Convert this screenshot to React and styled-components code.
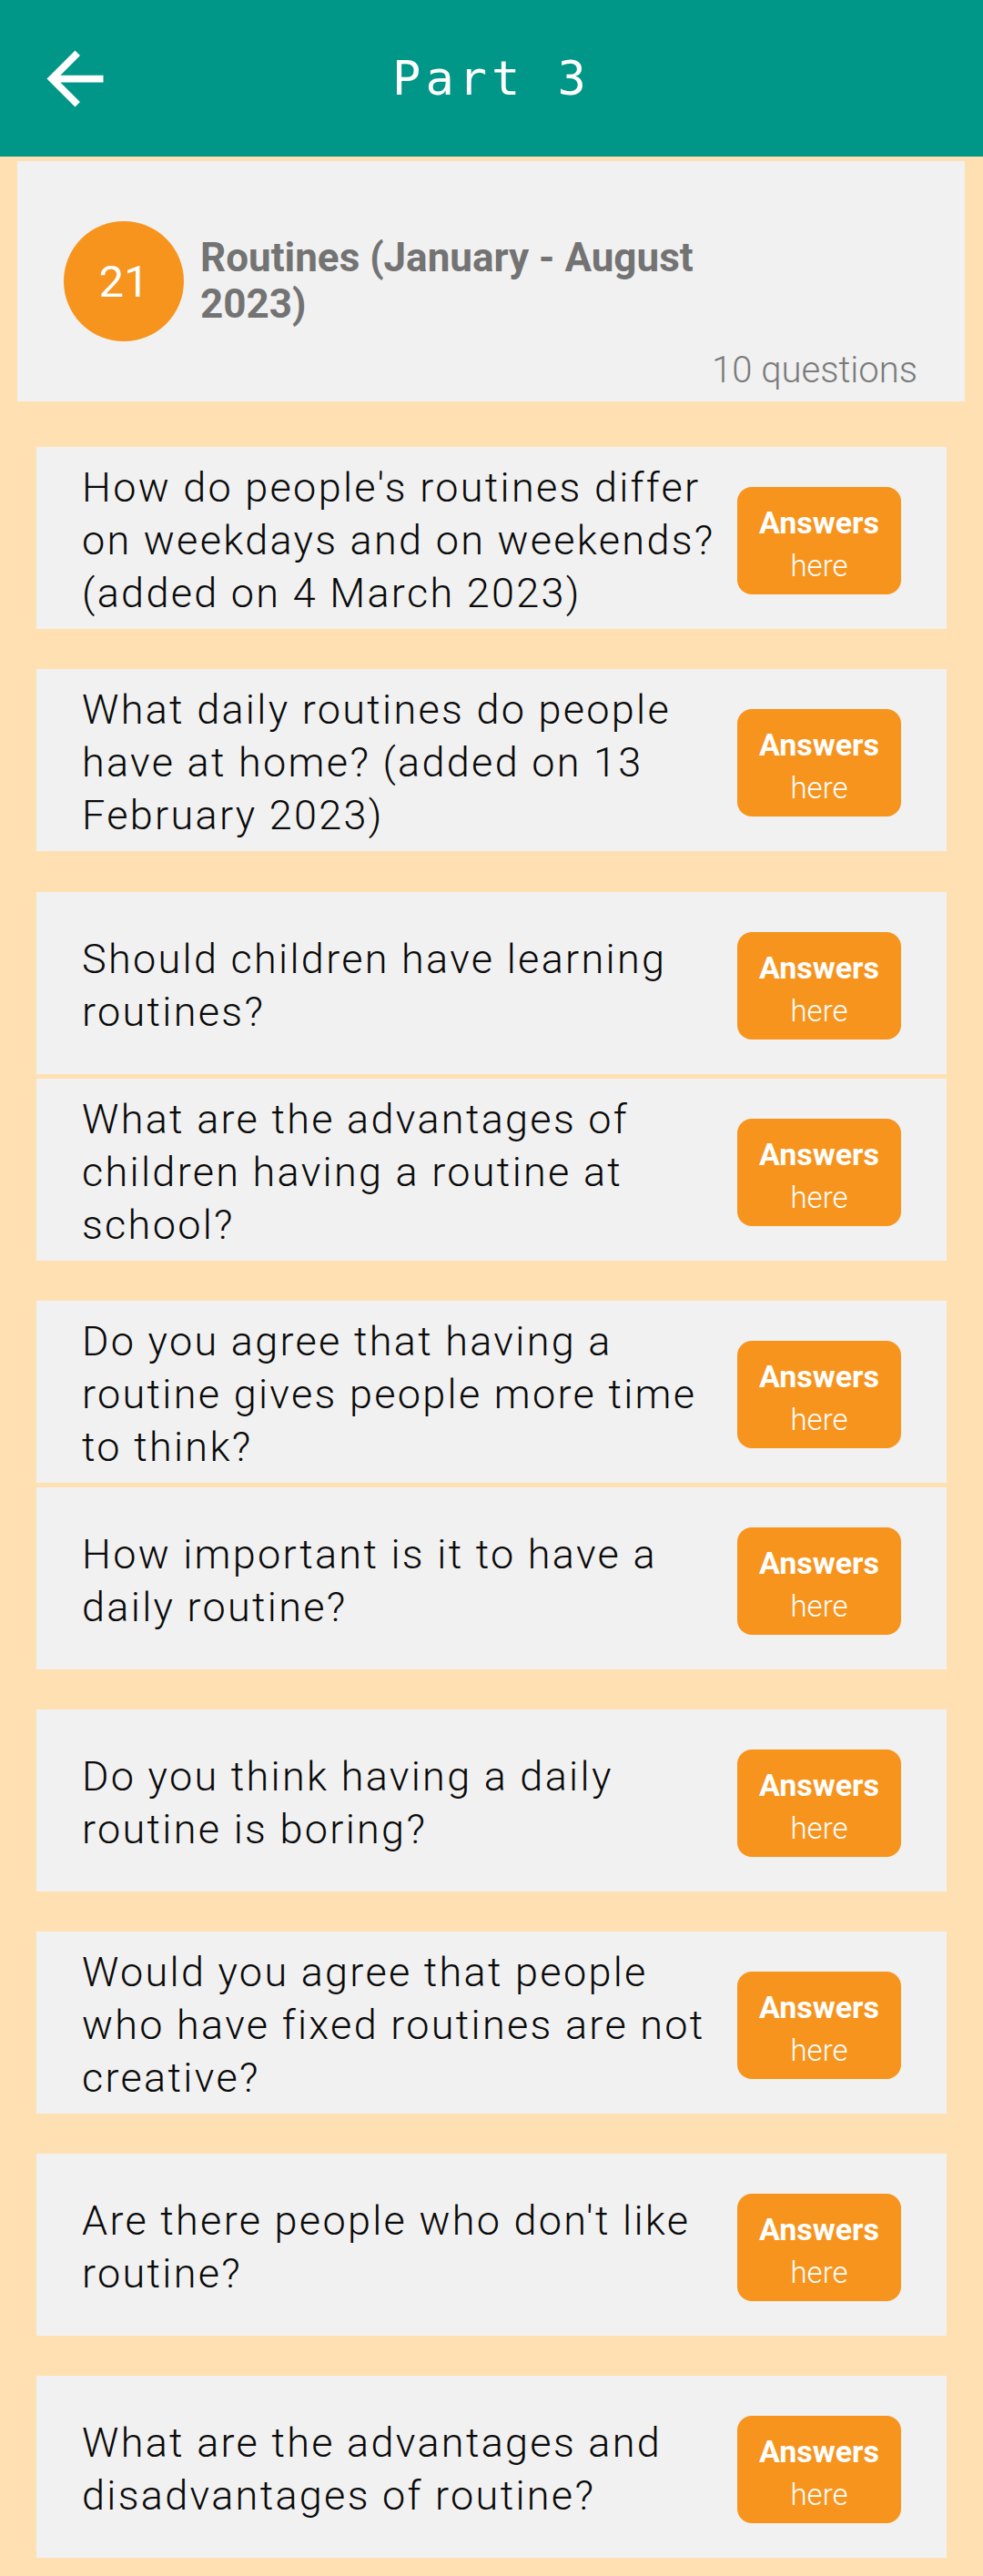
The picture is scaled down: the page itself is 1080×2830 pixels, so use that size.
import React from 'react'
import styled, { createGlobalStyle } from 'styled-components'

const GlobalStyle = createGlobalStyle`
  html, body {
    margin: 0;
    padding: 0;
    background: #ffe0b2;
  }
  body {
    font-family: Roboto, "Liberation Sans", sans-serif;
  }
`

const Page = styled.div`
  width: 1080px;
  min-height: 2830px;
  background: #ffe0b2;
  padding-bottom: 20px;
  box-sizing: border-box;
`

const TopBar = styled.header`
  height: 172px;
  background: #009688;
  display: flex;
  align-items: center;
`

const BackButton = styled.button`
  width: 93px;
  height: 93px;
  margin-left: 36px;
  padding: 0;
  border: 0;
  background: none;
  display: flex;
  align-items: center;
  justify-content: center;
  svg { width: 93px; height: 93px; display: block; }
`

const Title = styled.h1`
  flex: 1;
  margin: 0 129px 0 0;
  text-align: center;
  color: #fff;
  font-family: "DejaVu Sans Mono", "Liberation Mono", monospace;
  font-weight: 400;
  font-size: 52px;
  letter-spacing: 5px;
`

const TopicCard = styled.section`
  margin: 5px 20px 0 19px;
  background: #f1f1f1;
  padding: 66px 52px 11px 51px;
`

const TopicRow = styled.div`
  display: flex;
  align-items: center;
  gap: 18px;
`

const Badge = styled.div`
  width: 132px;
  height: 132px;
  border-radius: 50%;
  background: #f7941d;
  color: #fff;
  flex-shrink: 0;
  display: flex;
  align-items: center;
  justify-content: center;
  font-size: 49px;
  font-weight: 400;
`

const TopicTitle = styled.h2`
  margin: 0;
  max-width: 600px;
  color: #737373;
  font-size: 44px;
  line-height: 51px;
  font-weight: 700;
`

const Count = styled.div`
  margin-top: 8px;
  text-align: right;
  color: #7a7a7a;
  font-size: 40px;
  font-weight: 300;
  line-height: 47px;
`

const List = styled.div`
  display: flex;
  flex-direction: column;
  padding: 0 40px;
`

const QuestionCard = styled.div`
  margin-top: ${p => p.$gap}px;
  height: 200px;
  box-sizing: border-box;
  background: #f1f1f1;
  display: flex;
  align-items: center;
  padding: 6px 50px 0 50px;
`

const QuestionText = styled.p`
  flex: 1;
  margin: 0 21px 0 0;
  color: #0a0a0a;
  font-size: 45px;
  line-height: 58px;
  font-weight: 300;
  letter-spacing: 2.3px;
`

const AnswerButton = styled.button`
  flex-shrink: 0;
  width: 180px;
  height: 118px;
  border: 0;
  border-radius: 16px;
  background: #f7941d;
  color: #fff;
  font-family: Roboto, "Liberation Sans", sans-serif;
  display: flex;
  flex-direction: column;
  align-items: center;
  justify-content: center;
  padding: 8px 0 0;
`

const AnswerMain = styled.span`
  font-size: 34px;
  font-weight: 700;
  line-height: 48px;
`

const AnswerSub = styled.span`
  font-size: 33px;
  font-weight: 300;
  line-height: 48px;
`

const questions = [
  { text: "How do people's routines differ on weekdays and on weekends? (added on 4 March 2023)", gap: 50 },
  { text: 'What daily routines do people have at home? (added on 13 February 2023)', gap: 44 },
  { text: 'Should children have learning routines?', gap: 45 },
  { text: 'What are the advantages of children having a routine at school?', gap: 5 },
  { text: 'Do you agree that having a routine gives people more time to think?', gap: 44 },
  { text: 'How important is it to have a daily routine?', gap: 5 },
  { text: 'Do you think having a daily routine is boring?', gap: 44 },
  { text: 'Would you agree that people who have fixed routines are not creative?', gap: 44 },
  { text: "Are there people who don't like routine?", gap: 44 },
  { text: 'What are the advantages and disadvantages of routine?', gap: 44 },
]

const ArrowBack = () => (
  <svg viewBox="0 0 24 24" fill="#fff">
    <path d="M20 11H7.83l5.59-5.59L12 4l-8 8 8 8 1.41-1.41L7.83 13H20v-2z" />
  </svg>
)

export default function App() {
  return (
    <Page>
      <GlobalStyle />
      <TopBar>
        <BackButton aria-label="Back">
          <ArrowBack />
        </BackButton>
        <Title>Part 3</Title>
      </TopBar>

      <TopicCard>
        <TopicRow>
          <Badge>21</Badge>
          <TopicTitle>Routines (January - August 2023)</TopicTitle>
        </TopicRow>
        <Count>10 questions</Count>
      </TopicCard>

      <List>
        {questions.map((q, i) => (
          <QuestionCard key={i} $gap={q.gap}>
            <QuestionText>{q.text}</QuestionText>
            <AnswerButton>
              <AnswerMain>Answers</AnswerMain>
              <AnswerSub>here</AnswerSub>
            </AnswerButton>
          </QuestionCard>
        ))}
      </List>
    </Page>
  )
}
